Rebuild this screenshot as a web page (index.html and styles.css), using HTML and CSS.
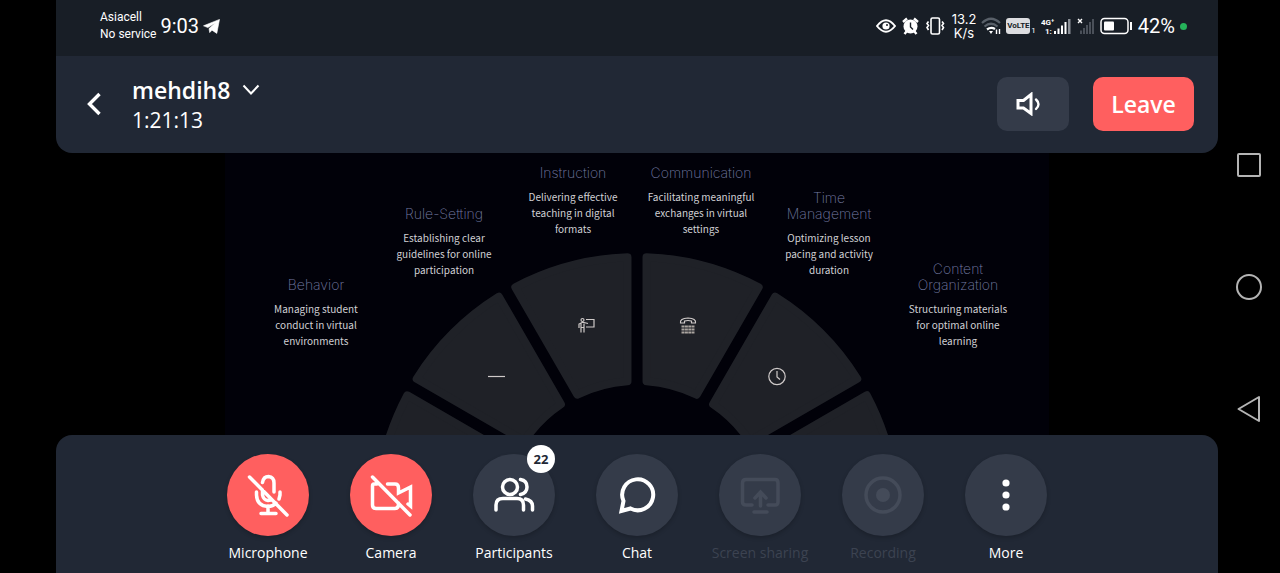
FILE: index.html
```html
<!DOCTYPE html>
<html lang="en">
<head>
<meta charset="utf-8">
<meta name="viewport" content="width=device-width, initial-scale=1">
<title>mehdih8</title>
<link rel="stylesheet" href="styles.css">
</head>
<body>
<div class="app">
  <div class="status">
    <div class="carrier"><span>Asiacell</span><span>No service</span></div>
    <span class="clock">9:03</span>
    <svg width="17" height="15" viewBox="0 0 17 15"><path d="M.5 6.8 16.5.4 13.8 14.4 9 11.2 6.7 13.6 6 9.6 12.4 4 4.8 8.6Z" fill="#fff" stroke="#fff" stroke-width=".6"/></svg>
    <div class="indicators">
      <div class="modes">
        <svg width="20" height="14" viewBox="0 0 20 14" fill="none" stroke="#fff" stroke-width="2"><path d="M1 7Q10-4.500 19 7Q10 18.500 1 7Z"/><circle cx="10" cy="7" r="3.600" fill="#fff" stroke="none"/><circle cx="11" cy="6" r="1" fill="#181e26" stroke="none"/></svg>
        <svg width="17" height="18" viewBox="0 0 17 18" fill="none" stroke="#fff"><circle cx="8.500" cy="9.500" r="7" fill="#fff" stroke="none"/><path d="M1 5 5 1.500M16 5 12 1.500M4.500 14.500 2.500 17M12.500 14.500 14.500 17" stroke-width="2.400"/><path d="M8.500 5.500V10L11 12.500" stroke="#181e26" stroke-width="1.400"/></svg>
        <svg width="20" height="18" viewBox="0 0 20 18" fill="none" stroke="#fff" stroke-width="1.600"><rect x="6" y="1" width="8.500" height="16" rx="1.500"/><path d="M3.500 4.500 2 6.500 3.500 8.500 2 10.500 3.500 13M17 4.500 18.500 6.500 17 8.500 18.500 10.500 17 13" /></svg>
      </div>
      <div class="speed"><span>13.2</span><span>K/s</span></div>
      <svg width="20" height="18" viewBox="0 0 20 18" fill="none" stroke-width="2.200"><path d="M1 6Q10-2.500 19 6M3.500 9.500Q10 4 16.500 9.500" stroke="#596069"/><path d="M6 12.500Q10 9.500 14 12" stroke="#fff"/><path d="M8 14 10 17 12 14Z" fill="#fff"/><path d="M15.500 17V12.500M18.500 12V17" stroke="#fff" stroke-width="1.400"/></svg>
      <span class="volte">VoLTE</span>
      <span class="sim">1</span>
      <svg width="31" height="18" viewBox="0 0 31 18"><text x="0" y="8" class="net">4G⁺</text><text x="4" y="17" class="net">1:</text><path d="M13 14H15V17H13ZM16.500 11.500H18.500V17H16.500ZM20 8.500H22V17H20ZM23.500 5H25.500V17H23.500Z" fill="#fff"/><path d="M27 2H29.500V17H27Z" fill="#8a8f96"/></svg>
      <svg width="18" height="18" viewBox="0 0 18 18"><path d="M3 13.500H5V17H3ZM6 11H8V17H6ZM9 8H11V17H9ZM12 5H14V17H12ZM15 2H17V17H15Z" fill="#4a5059"/><path d="M1 2 5 6M5 2 1 6" stroke="#fff" stroke-width="1.400"/></svg>
      <svg width="33" height="18" viewBox="0 0 33 18"><rect x="1" y="1.500" width="27" height="15" rx="3.500" fill="none" stroke="#fff" stroke-width="1.500"/><rect x="4" y="4.500" width="10" height="9" rx="1" fill="#fff"/><path d="M31 5V13" stroke="#fff" stroke-width="2"/></svg>
      <span class="clock">42%</span>
      <i class="dot"></i>
    </div>
  </div>

  <header class="header">
    <button class="back" aria-label="Back"><svg width="18" height="26" viewBox="0 0 18 26"><path d="M15.500 3 5.500 13 15.500 23" fill="none" stroke="#fff" stroke-width="3.400"/></svg></button>
    <div class="meeting">
      <button class="room">mehdih8 <svg width="18" height="12" viewBox="0 0 18 12"><path d="M1.500 1.500 9 9.500 16.500 1.500" fill="none" stroke="#fff" stroke-width="2"/></svg></button>
      <time class="elapsed">1:21:13</time>
    </div>
    <button class="speaker" aria-label="Speaker"><svg width="26" height="24" viewBox="0 0 26 24" fill="none" stroke="#fff" stroke-width="3"><path d="M2 8.500H7.500L15 2.500V21.500L7.500 16H2Z"/><path d="M20 7.500Q25 12 20 17" stroke-linecap="round" stroke-width="2.400"/></svg></button>
    <button class="leave">Leave</button>
  </header>

  <main class="stage">
    <div class="slide">
      <svg class="wheel" width="824" height="282" viewBox="0 0 824 282">
        <defs><path id="wedge" d="M-9.500-259.800A260 260 0 0 0-121.700-229.800L-59.600-122.300A136 136 0 0 1-9.500-135.700Z"/></defs>
        <g transform="translate(412 364)" fill="#1f2127" stroke="#1f2127" stroke-width="8" stroke-linejoin="round">
          <use href="#wedge" transform="rotate(-60)"/><use href="#wedge" transform="rotate(-30)"/><use href="#wedge"/>
          <use href="#wedge" transform="rotate(30)"/><use href="#wedge" transform="rotate(60)"/><use href="#wedge" transform="rotate(90)"/>
        </g>
        <g fill="none" stroke="#cfcac9" stroke-width="1.200">
          <path d="M263 223.500H280"/>
          <g transform="translate(353 165)"><circle cx="4.500" cy="2" r="1.500"/><path d="M8 1.500H16V9H8M1 10V6L4 4.500H6L10 5.500M3 5V14.500M6 5.500V14.500M3 9.500H6"/></g>
          <g transform="translate(454.500 164)"><path d="M1 6Q0 1.500 8.500 1Q17 1.500 16 6H12V4Q8.500 3 5 4V6Z"/><path d="M2 9.500H15M2 12.500H15M2 15.500H15" stroke-width="2.200" stroke-dasharray="3 .4" stroke="#aaa49f"/></g>
          <circle cx="552" cy="223.500" r="8.200"/><path d="M552 218V224L555 226.500"/>
        </g>
      </svg>
      <section class="topic behavior"><h2>Behavior</h2><p>Managing student<br>conduct in virtual<br>environments</p></section>
      <section class="topic rules"><h2>Rule-Setting</h2><p>Establishing clear<br>guidelines for online<br>participation</p></section>
      <section class="topic instruction"><h2>Instruction</h2><p>Delivering effective<br>teaching in digital<br>formats</p></section>
      <section class="topic communication"><h2>Communication</h2><p>Facilitating meaningful<br>exchanges in virtual<br>settings</p></section>
      <section class="topic timing"><h2>Time<br>Management</h2><p>Optimizing lesson<br>pacing and activity<br>duration</p></section>
      <section class="topic content"><h2>Content<br>Organization</h2><p>Structuring materials<br>for optimal online<br>learning</p></section>
    </div>
  </main>

  <footer class="toolbar">
    <button class="tool danger"><span class="disc"><svg width="44" height="44" viewBox="0 0 44 44"><path d="M16.500 9.500Q17.500 3.500 22.500 3.500Q28 4 28 10V19M16.500 17V22Q17.500 27 22 27.500L25 27M10.500 19V22Q11 33 22 33.500Q27 33.500 30 30M34 19V22L33 26M22 33V40M15 40.500H30M3.500 4 41 42"/></svg></span>Microphone</button>
    <button class="tool danger"><span class="disc"><svg width="44" height="44" viewBox="0 0 44 44"><path d="M8 11H5Q3.500 11 3.500 13V32Q3.500 35.500 7 35.500H26Q29.500 35.500 29.500 31V30M18.500 11H26Q29.500 11 29.500 15V20L41.500 14V33L39 31M3.500 4 41 42"/></svg></span>Camera</button>
    <button class="tool"><span class="disc"><svg width="44" height="44" viewBox="0 0 44 44"><circle cx="18" cy="14" r="7.500"/><path d="M4 37V32Q4 25.500 11 25.500H25Q31.500 25.500 31.500 32V37M28.500 6.500Q35 7.500 35 14Q35 20 28.500 21.500M33.500 26Q40.500 27.500 40.500 33V37"/></svg><b class="badge">22</b></span>Participants</button>
    <button class="tool"><span class="disc"><svg width="44" height="44" viewBox="0 0 44 44"><path d="M8.500 28A15.500 15.500 0 1 1 15.500 35.500L6.500 38Z" stroke-width="4"/></svg></span>Chat</button>
    <button class="tool" disabled><span class="disc"><svg width="44" height="44" viewBox="0 0 44 44"><path d="M14 32H8Q4.500 32 4.500 29V10Q4.500 6.500 8 6.500H37Q40 6.500 40 10V29Q40 32 37 32H30M22.500 33V20M17 25 22.500 19 28 25M16 39H29"/></svg></span>Screen sharing</button>
    <button class="tool" disabled><span class="disc"><svg width="44" height="44" viewBox="0 0 44 44"><circle cx="22" cy="22" r="17"/><circle cx="22" cy="22" r="7" class="solid"/></svg></span>Recording</button>
    <button class="tool"><span class="disc"><svg width="44" height="44" viewBox="0 0 44 44"><g class="solid"><circle cx="22" cy="10" r="3.600"/><circle cx="22" cy="22" r="3.600"/><circle cx="22" cy="34" r="3.600"/></g></svg></span>More</button>
  </footer>
</div>

<nav class="sysnav" aria-label="System">
  <button aria-label="Recent apps"><svg width="28" height="28" viewBox="0 0 28 28"><rect x="3" y="3" width="22" height="22" rx="1"/></svg></button>
  <button aria-label="Home"><svg width="28" height="28" viewBox="0 0 28 28"><circle cx="14" cy="14" r="12"/></svg></button>
  <button aria-label="Go back"><svg width="28" height="28" viewBox="0 0 28 28"><path d="M24 2V26L3.500 14Z"/></svg></button>
</nav>
</body>
</html>
```
FILE: styles.css
```css
* { box-sizing: border-box; }

body {
  margin: 0;
  min-height: 100vh;
  display: flex;
  padding-left: 56px;
  background: #000;
  color: #fff;
  font-family: "Open Sans", "Noto Sans", sans-serif;
}

button {
  margin: 0;
  padding: 0;
  border: 0;
  background: none;
  color: inherit;
  font: inherit;
}

svg { display: block; flex: none; }

.app {
  flex: 1;
  min-width: 0;
  display: flex;
  flex-direction: column;
}

/* Phone status bar */
.status {
  height: 56px;
  padding: 0 31px 4px 44px;
  display: flex;
  align-items: center;
  gap: 4px;
  background: #181e26;
  font-family: Roboto, sans-serif;
  font-size: 12px;
  line-height: 17px;
}
.carrier { display: flex; flex-direction: column; }
.clock { font-size: 20px; }
.indicators {
  margin-left: auto;
  display: flex;
  align-items: center;
  gap: 5px;
}
.modes {
  display: flex;
  align-items: center;
  gap: 6px;
  margin-right: 2px;
}
.speed {
  display: flex;
  flex-direction: column;
  align-items: center;
  font-family: Inter, sans-serif;
  font-size: 13px;
  line-height: 14px;
}
.volte {
  width: 24px;
  border-radius: 3px;
  background: #dcdde0;
  color: #181e26;
  font: bold 8px/16px Roboto, sans-serif;
  text-align: center;
  margin-right: -4px;
}
.sim { font-size: 8px; padding-top: 8px; }
.net { font: bold 8px Roboto, sans-serif; fill: #fff; }
.dot { width: 7px; height: 7px; border-radius: 50%; background: #25b35a; }

/* Meeting header */
.header {
  padding: 16px 24px 18px 28px;
  min-height: 97px;
  display: flex;
  align-items: center;
  background: #212835;
  border-radius: 0 0 16px 16px;
}
.back { width: 48px; }
.meeting { flex: 1; }
.room {
  display: flex;
  align-items: center;
  gap: 12px;
  font-size: 23px;
  line-height: 32px;
  font-weight: 600;
}
.elapsed { display: block; font-size: 21px; line-height: 28px; }
.speaker, .leave {
  height: 54px;
  border-radius: 10px;
  display: grid;
  place-items: center;
}
.speaker { width: 72px; padding-right: 8px; background: #343b49; }
.leave {
  width: 101px;
  margin-left: 24px;
  background: #ff5f5f;
  font-size: 23px;
  font-weight: 600;
}

/* Shared slide */
.stage { flex: 1; display: flex; justify-content: center; }
.slide {
  position: relative;
  width: 824px;
  background: #010109;
}
.topic {
  position: absolute;
  width: 140px;
  margin-left: -70px;
  text-align: center;
}
.topic h2 {
  margin: 0 0 8px;
  color: #737aa2;
  font: 200 14px/16px Inter, sans-serif;
}
.topic p {
  margin: 0;
  color: #d0d0d4;
  font: 10px/16px "Noto Sans CJK SC", sans-serif;
}
.behavior { left: 91px; top: 124px; }
.rules { left: 219px; top: 53px; }
.instruction { left: 348px; top: 12px; }
.communication { left: 476px; top: 12px; }
.timing { left: 604px; top: 37px; }
.content { left: 733px; top: 108px; }

/* Call controls */
.toolbar {
  padding: 19px 0 10px;
  display: grid;
  grid-template-columns: repeat(7, 123px);
  justify-content: center;
  background: #212835;
  border-radius: 16px 16px 0 0;
}
.tool {
  display: flex;
  flex-direction: column;
  align-items: center;
  gap: 7px;
  font-size: 14px;
  line-height: 20px;
}
.disc {
  position: relative;
  width: 82px;
  height: 82px;
  border-radius: 50%;
  display: grid;
  place-items: center;
  background: #343b49;
  box-shadow: 0 2px 4px #0003;
}
.disc svg {
  fill: none;
  stroke: #fff;
  stroke-width: 3.5;
  stroke-linecap: round;
}
.disc .solid { fill: #fff; stroke: none; }
.danger .disc { background: #ff5f5f; }
.tool:disabled { color: #3c4351; }
.tool:disabled svg { stroke: #444b59; }
.tool:disabled .solid { fill: #444b59; }
.badge {
  position: absolute;
  top: -9px;
  right: 0;
  width: 28px;
  border-radius: 14px;
  background: #fff;
  color: #212835;
  font-size: 13px;
  line-height: 28px;
}

/* System navigation */
.sysnav {
  width: 62px;
  display: flex;
  flex-direction: column;
  justify-content: center;
  align-items: center;
  gap: 94px;
}
.sysnav svg { fill: none; stroke: #b4b4b4; stroke-width: 2; stroke-linejoin: round; }
```
